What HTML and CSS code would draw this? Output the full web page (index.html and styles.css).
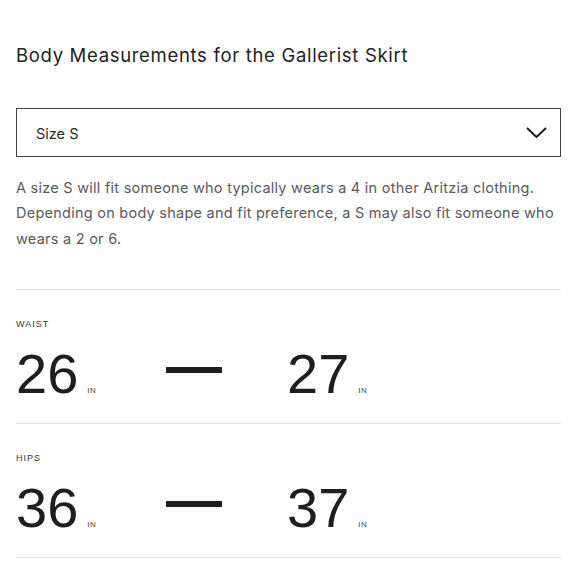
FILE: index.html
```html
<!DOCTYPE html>
<html lang="en">
<head>
<meta charset="utf-8">
<title>Body Measurements</title>
<link rel="stylesheet" href="styles.css">
</head>
<body>
<main class="page">
  <h1 class="title">Body Measurements for the Gallerist Skirt</h1>
  <div class="select">
    <span class="select-label">Size S</span>
    <svg class="chevron" width="21" height="11" viewBox="0 0 21 11" aria-hidden="true">
      <polyline points="1,1 10.5,10 20,1" fill="none" stroke="#1e1e1e" stroke-width="2"/>
    </svg>
  </div>
  <p class="desc">A size S will fit someone who typically wears a 4 in other Aritzia clothing. Depending on body shape and fit preference, a S may also fit someone who wears a 2 or 6.</p>
  <section class="measure">
    <div class="measure-label">WAIST</div>
    <div class="measure-row">
      <div class="value"><span class="num">26</span><span class="unit">IN</span></div>
      <div class="dash"></div>
      <div class="value"><span class="num">27</span><span class="unit">IN</span></div>
    </div>
  </section>
  <section class="measure">
    <div class="measure-label">HIPS</div>
    <div class="measure-row">
      <div class="value"><span class="num">36</span><span class="unit">IN</span></div>
      <div class="dash"></div>
      <div class="value"><span class="num">37</span><span class="unit">IN</span></div>
    </div>
  </section>
  <div class="end-rule"></div>
</main>
</body>
</html>
```

FILE: styles.css
```css
html, body {
  margin: 0;
  padding: 0;
  background: #fff;
}

.page {
  width: 545px;
  padding: 0 19px 0 16px;
  font-family: Inter, "Liberation Sans", sans-serif;
  color: #222;
}

.title {
  margin: 43px 0 0;
  font-size: 18.5px;
  line-height: 24px;
  letter-spacing: 0.68px;
  font-weight: 400;
  color: #222;
}

.select {
  margin-top: 41px;
  height: 47px;
  border: 1px solid #444;
  display: flex;
  align-items: center;
  justify-content: space-between;
  padding: 2px 13px 0 19px;
  box-sizing: content-box;
  height: 45px;
}

.select-label {
  font-size: 14.5px;
  color: #2a2a2a;
}

.chevron {
  display: block;
  margin-top: -2px;
}

.desc {
  margin: 17.5px 0 0;
  font-size: 14.5px;
  line-height: 25.5px;
  letter-spacing: 0.25px;
  color: #5a5a5a;
}

.measure {
  margin-top: 38px;
  border-top: 1px solid #e3e3e3;
  padding: 27.5px 0 21.5px;
}

.measure + .measure {
  margin-top: 0;
}

.measure-label {
  font-family: "Liberation Sans", Arial, sans-serif;
  font-size: 9px;
  line-height: 12px;
  letter-spacing: 1px;
  color: #333;
}

.measure-row {
  margin-top: 16px;
  display: grid;
  grid-template-columns: 150px 121px 1fr;
  align-items: start;
}

.value {
  display: flex;
  align-items: baseline;
  gap: 9px;
}

.num {
  font-family: "Liberation Sans", Arial, sans-serif;
  font-size: 56px;
  line-height: 56px;
  color: #1e1e1e;
}

.unit {
  font-family: "Liberation Sans", Arial, sans-serif;
  font-size: 8px;
  letter-spacing: 0.5px;
  color: #444;
}

.dash {
  width: 56px;
  height: 6px;
  margin-top: 21.5px;
  background: #1e1e1e;
}

.end-rule {
  border-top: 1px solid #e3e3e3;
}
```
